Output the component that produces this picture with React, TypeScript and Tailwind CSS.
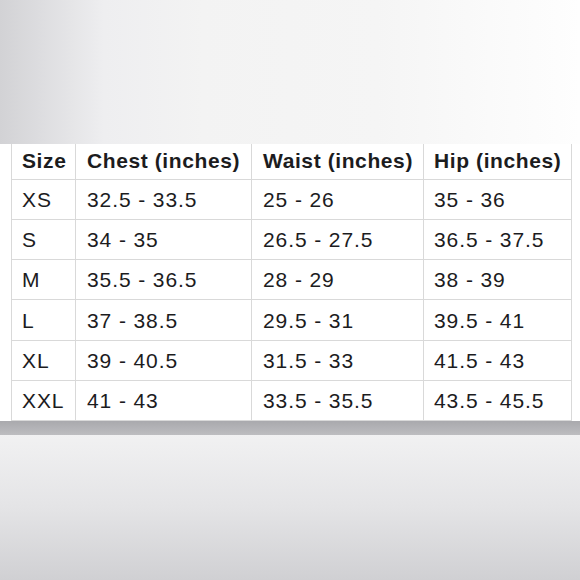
import React from 'react';

const headers = ['Size', 'Chest (inches)', 'Waist (inches)', 'Hip (inches)'];

const rows = [
  ['XS', '32.5 - 33.5', '25 - 26', '35 - 36'],
  ['S', '34 - 35', '26.5 - 27.5', '36.5 - 37.5'],
  ['M', '35.5 - 36.5', '28 - 29', '38 - 39'],
  ['L', '37 - 38.5', '29.5 - 31', '39.5 - 41'],
  ['XL', '39 - 40.5', '31.5 - 33', '41.5 - 43'],
  ['XXL', '41 - 43', '33.5 - 35.5', '43.5 - 45.5'],
];

const colWidths = ['w-[64px]', 'w-[176px]', 'w-[172px]', 'w-[148px]'];
const padLeft = ['pl-[10px]', 'pl-[11px]', 'pl-[11px]', 'pl-[10px]'];

function SizeTable() {
  return (
    <table className="ml-[11px] table-fixed border-collapse text-[21px] text-[#1c1c1e]">
      <thead>
        <tr className="h-[35px]">
          {headers.map((h, i) => (
            <th
              key={h}
              className={`${colWidths[i]} ${padLeft[i]} border-x border-b border-[#d9d9d9] pb-[2px] text-left font-semibold leading-none tracking-[0.6px]`}
            >
              {h}
            </th>
          ))}
        </tr>
      </thead>
      <tbody>
        {rows.map((r) => (
          <tr key={r[0]} className="h-[40.3px]">
            {r.map((c, i) => (
              <td
                key={i}
                className={`${padLeft[i]} border-x border-b border-[#d9d9d9] leading-none tracking-[0.9px]`}
              >
                {c}
              </td>
            ))}
          </tr>
        ))}
      </tbody>
    </table>
  );
}

export default function App() {
  return (
    <div className="flex h-[580px] w-[580px] flex-col overflow-hidden font-['Liberation_Sans',Arial,sans-serif]">
      <div className="h-[144px] bg-[linear-gradient(to_right,#d2d2d5,#eeeef0_18%,#f3f3f3_35%,#f5f5f5_65%,#fefefe)]" />
      <div className="h-[277px] bg-white">
        <SizeTable />
      </div>
      <div className="h-[14px] bg-[linear-gradient(to_bottom,#a9a9ad,#bdbdc0)]" />
      <div className="flex-1 bg-[linear-gradient(to_bottom,#f1f1f2,#e4e4e6_50%,#d0d0d3)]" />
    </div>
  );
}
